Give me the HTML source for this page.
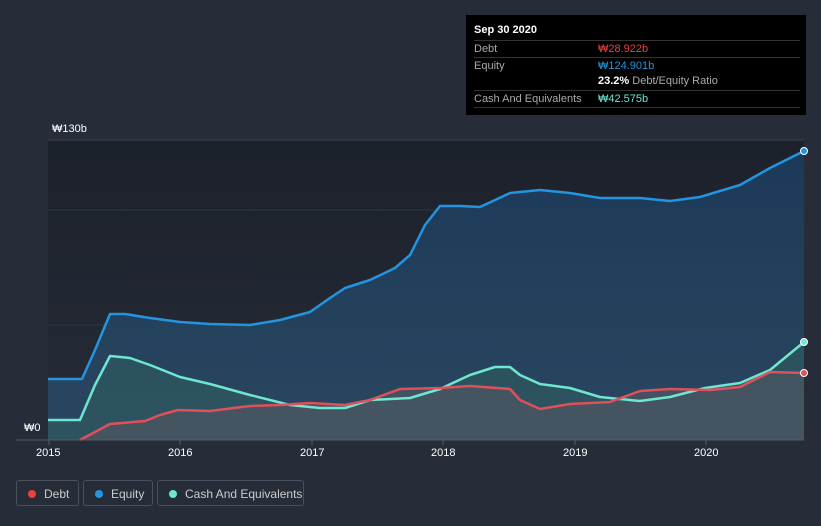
<!DOCTYPE html>
<html><head><meta charset="utf-8"><style>
body{margin:0;width:821px;height:526px;background:#262c38;font-family:"Liberation Sans",sans-serif;overflow:hidden;position:relative}
.tt{position:absolute;left:466px;top:15px;width:340px;height:100px;background:#000;color:#fff;font-size:11px}
.tt .r{position:absolute;left:8px;right:6px;border-top:1px solid #333;height:16px;line-height:16px;color:#aaa}
.tt .r span{position:absolute;left:124px}
.leg{position:absolute;top:480px;height:26px;border:1px solid #4a505c;border-radius:3px;color:#ccc;font-size:12px;line-height:26px;box-sizing:border-box}
.leg i{position:absolute;left:11px;top:9px;width:8px;height:8px;border-radius:50%}
.leg b{font-weight:normal;position:absolute;left:27px}
.ax{position:absolute;color:#fff;font-size:11px}
</style></head><body>
<svg width="821" height="526" style="position:absolute;left:0;top:0">
<defs><linearGradient id="bg" x1="0" y1="0" x2="0" y2="1"><stop offset="0" stop-color="#1c212b"/><stop offset="1" stop-color="#262c38"/></linearGradient>
<linearGradient id="eq" x1="0" y1="0" x2="0" y2="1"><stop offset="0" stop-color="#1c3a58"/><stop offset="1" stop-color="#2a4660"/></linearGradient></defs>
<rect x="48" y="140" width="756" height="300" fill="url(#bg)"/>
<line x1="48" y1="140" x2="804" y2="140" stroke="#3a404c"/>
<line x1="48" y1="210" x2="804" y2="210" stroke="#30363f"/>
<line x1="48" y1="325" x2="804" y2="325" stroke="#30363f"/>
<path d="M48,379 L82,379 L95,350 L110,314 L125,314 L150,318 L180,322 L210,324 L250,325 L280,320 L310,312 L330,298 L345,288 L370,280 L395,268 L410,255 L425,225 L440,206 L460,206 L480,207 L510,193 L540,190 L570,193 L600,198 L640,198 L670,201 L700,197 L740,185 L770,168 L804,151 L804,440 L48,440Z" fill="url(#eq)"/>
<path d="M48,420 L80,420 L95,385 L110,356 L130,358 L150,365 L180,377 L210,384 L250,395 L290,405 L320,408 L345,408 L370,400 L410,398 L440,389 L470,375 L495,367 L510,367 L520,375 L540,384 L570,388 L600,397 L640,401 L670,397 L705,388 L740,383 L770,370 L804,342 L804,440 L48,440Z" fill="#2e5560" opacity="0.85"/>
<path d="M80,440 L110,424 L145,421 L160,415 L178,410 L210,411 L250,406 L280,405 L310,403 L345,405 L370,400 L400,389 L440,388 L470,386 L510,389 L520,400 L540,409 L570,404 L610,402 L640,391 L670,389 L710,390 L740,387 L770,372 L804,373 L804,440Z" fill="#4a5562" opacity="0.8"/>
<path d="M48,379 L82,379 L95,350 L110,314 L125,314 L150,318 L180,322 L210,324 L250,325 L280,320 L310,312 L330,298 L345,288 L370,280 L395,268 L410,255 L425,225 L440,206 L460,206 L480,207 L510,193 L540,190 L570,193 L600,198 L640,198 L670,201 L700,197 L740,185 L770,168 L804,151" fill="none" stroke="#2394e0" stroke-width="2.5" stroke-linejoin="round"/>
<path d="M48,420 L80,420 L95,385 L110,356 L130,358 L150,365 L180,377 L210,384 L250,395 L290,405 L320,408 L345,408 L370,400 L410,398 L440,389 L470,375 L495,367 L510,367 L520,375 L540,384 L570,388 L600,397 L640,401 L670,397 L705,388 L740,383 L770,370 L804,342" fill="none" stroke="#6ee6d0" stroke-width="2.5" stroke-linejoin="round"/>
<path d="M80,440 L110,424 L145,421 L160,415 L178,410 L210,411 L250,406 L280,405 L310,403 L345,405 L370,400 L400,389 L440,388 L470,386 L510,389 L520,400 L540,409 L570,404 L610,402 L640,391 L670,389 L710,390 L740,387 L770,372 L804,373" fill="none" stroke="#e0505a" stroke-width="2.5" stroke-linejoin="round"/>
<line x1="16" y1="440" x2="804" y2="440" stroke="#555b66"/>
<g stroke="#555b66"><line x1="49" y1="440" x2="49" y2="445"/><line x1="180" y1="440" x2="180" y2="445"/><line x1="312" y1="440" x2="312" y2="445"/><line x1="443" y1="440" x2="443" y2="445"/><line x1="575" y1="440" x2="575" y2="445"/><line x1="706" y1="440" x2="706" y2="445"/></g>
<circle cx="804" cy="151" r="3.5" fill="#2394e0" stroke="#fff" stroke-width="1"/>
<circle cx="804" cy="342" r="3.5" fill="#6ee6d0" stroke="#fff" stroke-width="1"/>
<circle cx="804" cy="373" r="3.5" fill="#e0505a" stroke="#fff" stroke-width="1"/>
</svg>
<div class="ax" style="left:52px;top:123px">₩130b</div>
<div class="ax" style="left:24px;top:422px">₩0</div>
<div class="ax" style="left:36px;top:447px">2015</div>
<div class="ax" style="left:168px;top:447px">2016</div>
<div class="ax" style="left:300px;top:447px">2017</div>
<div class="ax" style="left:431px;top:447px">2018</div>
<div class="ax" style="left:563px;top:447px">2019</div>
<div class="ax" style="left:694px;top:447px">2020</div>
<div class="tt">
<div style="position:absolute;left:8px;top:9px;font-weight:bold">Sep 30 2020</div>
<div class="r" style="top:25px">Debt<span style="color:#e8413e">₩28.922b</span></div>
<div class="r" style="top:42px">Equity<span style="color:#2394e0">₩124.901b</span></div>
<div class="r" style="top:58px;border:none"><span style="color:#aaa"><b style="color:#fff">23.2%</b> Debt/Equity Ratio</span></div>
<div class="r" style="top:75px">Cash And Equivalents<span style="color:#6ee6d0">₩42.575b</span></div>
<div class="r" style="top:92px;height:0"></div>
</div>
<div class="leg" style="left:16px;width:63px"><i style="background:#e8413e"></i><b>Debt</b></div>
<div class="leg" style="left:83px;width:70px"><i style="background:#2394e0"></i><b>Equity</b></div>
<div class="leg" style="left:157px;width:147px"><i style="background:#6ee6d0"></i><b>Cash And Equivalents</b></div>
</body></html>
